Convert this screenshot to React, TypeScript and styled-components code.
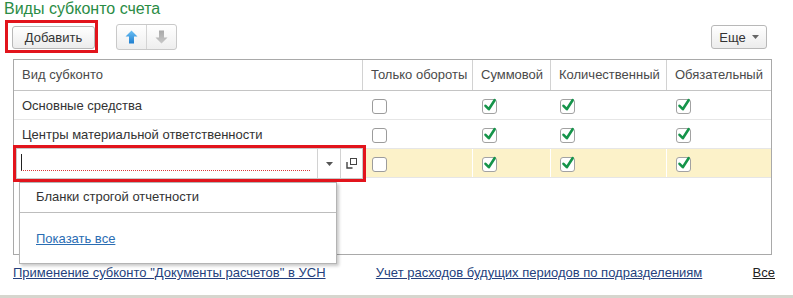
import styled, { createGlobalStyle } from 'styled-components';

const GlobalStyle = createGlobalStyle`
  body {
    margin: 0;
    background: #fff;
    font-family: "Liberation Sans", Arial, sans-serif;
    font-size: 13px;
    color: #333;
  }
`;

const Page = styled.div`
  position: relative;
  width: 793px;
  height: 298px;
  box-sizing: border-box;
  border-bottom: 3px solid #d6d6ce;
  display: flex;
  flex-direction: column;
  overflow: hidden;
`;

const Title = styled.div`
  padding-left: 4px;
  height: 19px;
  line-height: 17px;
  font-size: 16px;
  color: #2a8c45;
`;

const Toolbar = styled.div`
  display: flex;
  align-items: center;
  padding: 1px 26px 0 5px;
`;

const Highlight = styled.div`
  border: 3px solid #e2141c;
  box-sizing: border-box;
`;

const AddFrame = styled(Highlight)`
  padding: 3px 0 1px 4px;
`;

const Button = styled.div<{ $width: number }>`
  width: ${p => p.$width}px;
  height: 23px;
  box-sizing: border-box;
  border: 1px solid #b8b8b8;
  border-radius: 3px;
  background: linear-gradient(#ffffff, #ececec);
  display: flex;
  align-items: center;
  justify-content: center;
  gap: 6px;
  color: #333;
`;

const ArrowGroup = styled.div`
  display: flex;
  margin-left: 18px;
  height: 24px;
  border: 1px solid #c9c9c9;
  border-radius: 3px;
  background: linear-gradient(#ffffff, #eeeeee);
`;

const ArrowBtn = styled.div<{ $last?: boolean }>`
  width: 29px;
  display: flex;
  align-items: center;
  justify-content: center;
  border-right: ${p => (p.$last ? 'none' : '1px solid #d4d4d4')};
`;

const MoreButton = styled(Button)`
  margin-left: auto;
  height: 24px;
  margin-top: 1px;
`;

const Table = styled.div`
  margin: 6px 0 0 13px;
  width: 759px;
  height: 196px;
  box-sizing: border-box;
  border: 1px solid #a9a9a9;
`;

const COLS = '349px 110px 78px 116px 104px';

const HeadRow = styled.div`
  display: grid;
  grid-template-columns: ${COLS};
  height: 31px;
  box-sizing: border-box;
  border-bottom: 1px solid #c4c4c4;
`;

const HeadCell = styled.div<{ $last?: boolean }>`
  padding-left: 8px;
  line-height: 30px;
  color: #4a4a4a;
  white-space: nowrap;
  overflow: hidden;
  border-right: ${p => (p.$last ? 'none' : '1px solid #d2d2d2')};
`;

const Row = styled.div<{ $current?: boolean }>`
  display: grid;
  grid-template-columns: ${COLS};
  height: 29px;
  box-sizing: border-box;
  border-bottom: 1px solid #e6e6e6;
  background: ${p => (p.$current ? '#fcf2c9' : '#fff')};
`;

const Cell = styled.div<{ $last?: boolean }>`
  position: relative;
  display: flex;
  align-items: center;
  padding-left: 8px;
  white-space: nowrap;
  color: #333;
  border-right: ${p => (p.$last ? 'none' : '1px solid #fff')};
`;

const BoxCell = styled(Cell)`
  padding-left: 9px;
`;

const EditFrame = styled(Highlight)`
  position: absolute;
  top: -4px;
  left: -1px;
  width: 353px;
  height: 37px;
  z-index: 2;
`;

const Field = styled.div`
  display: flex;
  height: 100%;
  box-sizing: border-box;
  border: 1px solid #c8c8c8;
  background: #fff;
`;

const InputArea = styled.div`
  flex: 1;
  padding: 5px 7px 0 4px;
`;

const Caret = styled.div`
  height: 17px;
  box-sizing: border-box;
  border-left: 1px solid #222;
  border-bottom: 1px dotted #d8383a;
`;

const FieldBtn = styled.div<{ $width: number }>`
  width: ${p => p.$width}px;
  border-left: 1px solid #d2d2d2;
  display: flex;
  align-items: center;
  justify-content: center;
`;

const Popup = styled.div`
  position: absolute;
  top: 33px;
  left: 5px;
  width: 318px;
  height: 82px;
  box-sizing: border-box;
  background: #fff;
  border: 1px solid #b4b4b4;
  box-shadow: 2px 2px 3px rgba(0, 0, 0, 0.22);
  z-index: 1;
`;

const PopupItem = styled.div`
  height: 30px;
  line-height: 28px;
  box-sizing: border-box;
  padding-left: 16px;
  border-bottom: 1px solid #bdbdbd;
  color: #333;
`;

const PopupLink = styled.a`
  display: inline-block;
  margin: 18px 0 0 16px;
  line-height: 16px;
  color: #2a6db3;
  text-decoration: underline;
`;

const Footer = styled.div`
  display: flex;
  padding: 10px 18px 0 13px;
  line-height: 16px;
`;

const FooterLink = styled.a<{ $plain?: boolean; $push?: boolean }>`
  color: ${p => (p.$plain ? '#222' : '#243f7d')};
  text-decoration: underline;
  margin-left: ${p => (p.$push ? 'auto' : '0')};
  & + & {
    margin-left: ${p => (p.$push ? 'auto' : '43px')};
  }
`;

const Check = ({ on }: { on: boolean }) => (
  <svg width="16" height="17" viewBox="0 0 16 17">
    <rect x="0.5" y="2.5" width="14" height="14" rx="2.5" fill="#fff" stroke={on ? '#a2a2a2' : '#9c9c9c'} />
    {on && (
      <path d="M3.5 8.8 L6.8 12.2 L12.6 3.2" fill="none" stroke="#15944a" strokeWidth="2.6" strokeLinecap="round" strokeLinejoin="round" />
    )}
  </svg>
);

const Arrow = ({ up }: { up: boolean }) => (
  <svg width="13" height="14" viewBox="0 0 13 14" style={{ transform: up ? 'none' : 'rotate(180deg)' }}>
    <defs>
      <linearGradient id={up ? 'ga' : 'gb'} x1="0" y1="0" x2="0" y2="1">
        <stop offset="0" stopColor={up ? '#6cc0f4' : '#c8c8c8'} />
        <stop offset="1" stopColor={up ? '#1f7fd0' : '#a8a8a8'} />
      </linearGradient>
    </defs>
    <path d="M6.5 0.5 L12.5 6.5 L9 6.5 L9 13.5 L4 13.5 L4 6.5 L0.5 6.5 Z" fill={`url(#${up ? 'ga' : 'gb'})`} />
  </svg>
);

const Tri = ({ color = '#555' }: { color?: string }) => (
  <svg width="7" height="4" viewBox="0 0 7 4">
    <path d="M0 0 H7 L3.5 4 Z" fill={color} />
  </svg>
);

const OpenIcon = () => (
  <svg width="11" height="11" viewBox="0 0 11 11">
    <rect x="4.5" y="0.5" width="6" height="6" fill="none" stroke="#444" />
    <path d="M1 4 V10 H6.5" fill="none" stroke="#444" strokeWidth="1.4" />
  </svg>
);

const rows = [
  { name: 'Основные средства', flags: [false, true, true, true] },
  { name: 'Центры материальной ответственности', flags: [false, true, true, true] },
];

const headers = ['Вид субконто', 'Только обороты', 'Суммовой', 'Количественный', 'Обязательный'];

export default function App() {
  return (
    <Page>
      <GlobalStyle />
      <Title>Виды субконто счета</Title>
      <Toolbar>
        <AddFrame>
          <Button $width={83}>Добавить</Button>
        </AddFrame>
        <ArrowGroup>
          <ArrowBtn><Arrow up /></ArrowBtn>
          <ArrowBtn $last><Arrow up={false} /></ArrowBtn>
        </ArrowGroup>
        <MoreButton $width={56}>
          Еще <Tri color="#666" />
        </MoreButton>
      </Toolbar>
      <Table>
        <HeadRow>
          {headers.map((h, i) => (
            <HeadCell key={h} $last={i === headers.length - 1}>{h}</HeadCell>
          ))}
        </HeadRow>
        {rows.map(r => (
          <Row key={r.name}>
            <Cell>{r.name}</Cell>
            {r.flags.map((f, i) => (
              <BoxCell key={i} $last={i === 3}><Check on={f} /></BoxCell>
            ))}
          </Row>
        ))}
        <Row $current>
          <Cell>
            <EditFrame>
              <Field>
                <InputArea><Caret /></InputArea>
                <FieldBtn $width={22}><Tri /></FieldBtn>
                <FieldBtn $width={21}><OpenIcon /></FieldBtn>
              </Field>
            </EditFrame>
            <Popup>
              <PopupItem>Бланки строгой отчетности</PopupItem>
              <PopupLink>Показать все</PopupLink>
            </Popup>
          </Cell>
          {[false, true, true, true].map((f, i) => (
            <BoxCell key={i} $last={i === 3}><Check on={f} /></BoxCell>
          ))}
        </Row>
      </Table>
      <Footer>
        <FooterLink>Применение субконто "Документы расчетов" в УСН</FooterLink>
        <FooterLink>Учет расходов будущих периодов по подразделениям</FooterLink>
        <FooterLink $plain $push>Все</FooterLink>
      </Footer>
    </Page>
  );
}
